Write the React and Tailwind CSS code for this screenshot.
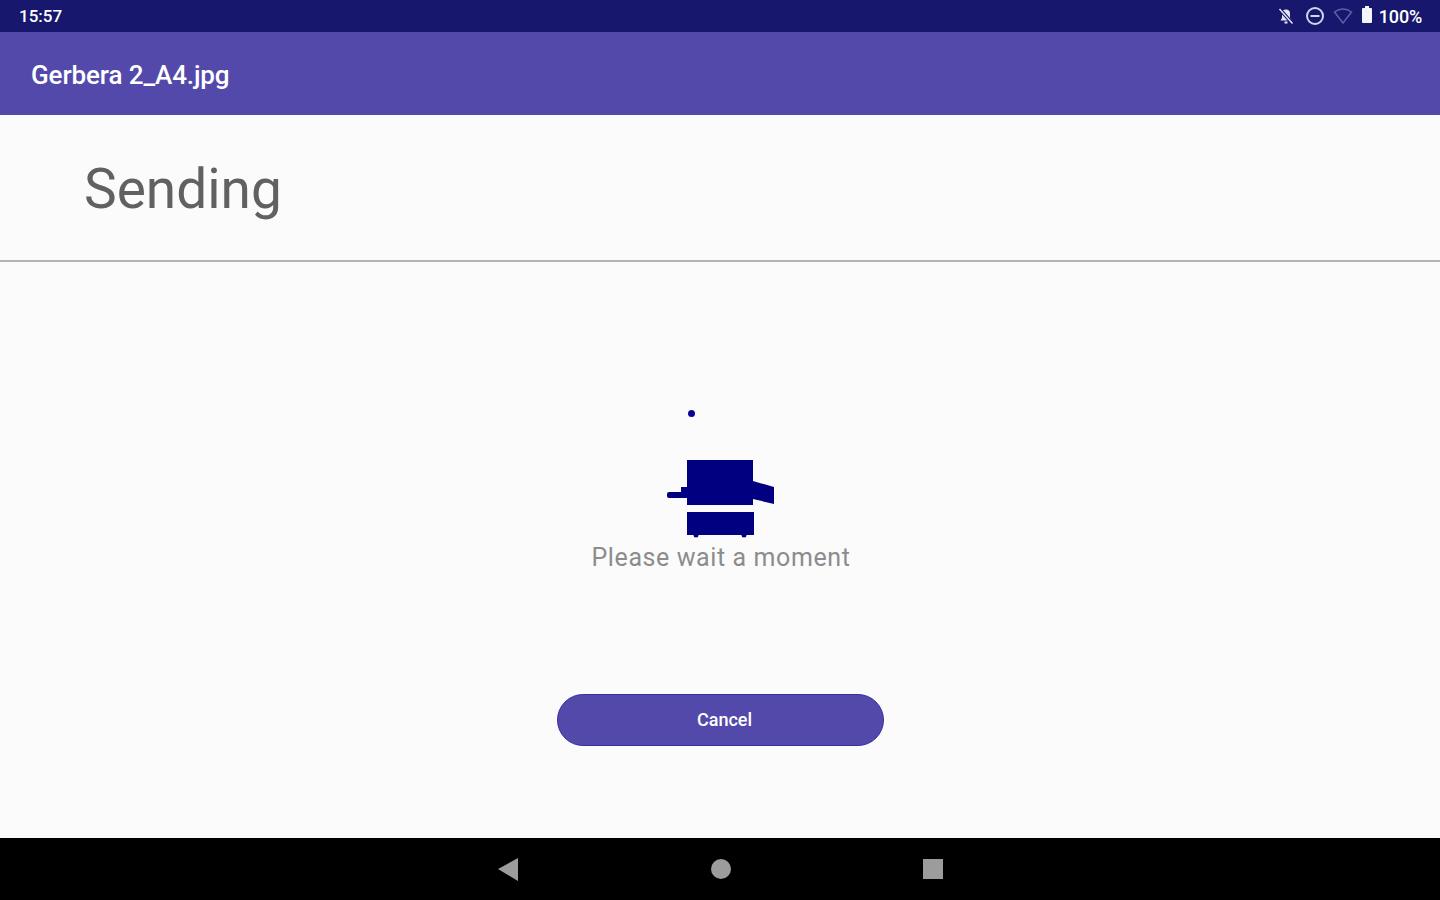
import React from "react";

const Printer = () => (
  <svg width="110" height="82" viewBox="0 0 110 82" className="block" fill="#000080">
    {/* main body */}
    <path d="M21 1H87V46H21V39H15V28H21Z" />
    {/* paper tray in */}
    <rect x="1" y="33" width="20" height="6" rx="2" />
    {/* paper tray out */}
    <path d="M87 22L108 28V45L87 40Z" />
    {/* lower cabinet */}
    <rect x="21" y="53" width="67" height="23" />
    {/* feet */}
    <circle cx="30" cy="76" r="2.500" />
    <circle cx="78" cy="76" r="2.500" />
  </svg>
);

const App = () => {
  return (
    <div className="flex h-[900px] w-[1440px] flex-col overflow-hidden bg-[#fbfbfc] font-['Roboto',sans-serif]">
      {/* Status bar */}
      <div className="flex h-[32px] items-center justify-between bg-[#17176e] pl-[19px] pr-[18px] text-white">
        <span className="pt-[1px] text-[17px] font-medium">15:57</span>
        <div className="flex items-center">
          <svg width="18" height="18" viewBox="0 0 18 18" className="mr-[10px]" fill="none" stroke="#e4e4f2" strokeWidth="2">
            <path d="M9 2.500a4 4 0 0 1 4 4V11l1.500 2.500h-11L5 11V6.500a4 4 0 0 1 4-4Z" fill="#e4e4f2" stroke="none" />
            <path d="M7.500 15.500h3" />
            <path d="M2.500 2l13 14.500" stroke="#17176e" strokeWidth="3.500" />
            <path d="M2.500 2l13 14.500" strokeWidth="1.500" />
          </svg>
          <svg width="20" height="20" viewBox="0 0 20 20" className="mr-[8px]" fill="none" stroke="#d4d4ea" strokeWidth="2">
            <circle cx="10" cy="10" r="8" />
            <path d="M5.500 10h9" />
          </svg>
          <svg width="20" height="18" viewBox="0 0 20 18" className="mr-[8px]" fill="none" stroke="#5f5fa3" strokeWidth="1.500">
            <path d="M1.500 5C6.500 1 13.500 1 18.500 5L10 16Z" />
          </svg>
          <svg width="12" height="17" viewBox="0 0 12 17" className="mr-[6px] mb-[3px]" fill="#f4f4fb">
            <path d="M4 0h4v2h2a1 1 0 0 1 1 1v13a1 1 0 0 1-1 1H2a1 1 0 0 1-1-1V3a1 1 0 0 1 1-1h2Z" />
          </svg>
          <span className="text-[18px] font-medium tracking-[-0.2px]">100%</span>
        </div>
      </div>

      {/* App bar */}
      <div className="flex h-[83px] items-center bg-[#5349ab] pl-[31px] pt-[3px] text-[26px] font-medium tracking-[-0.1px] text-white">
        Gerbera 2_A4.jpg
      </div>

      {/* Heading */}
      <div className="flex h-[147px] items-center border-b-2 border-[#b3b3b3] pl-[84px] pt-[3px]">
        <h1 className="text-[55px] leading-none text-[#616161]">Sending</h1>
      </div>

      {/* Body */}
      <div className="flex flex-1 flex-col items-center">
        <div className="mt-[148px] mr-[58px] h-[7px] w-[7px] rounded-full bg-[#0d0096]" />
        <div className="mt-[42px] mb-[2px] ml-[2px]">
          <Printer />
        </div>
        <p className="ml-[2px] text-[25px] leading-[30px] tracking-[0.6px] text-[#8c8c8c]">Please wait a moment</p>
        <button className="mt-[121px] flex h-[52px] w-[327px] items-center justify-center rounded-full border border-[#3a2fa5] bg-[#5349ab] pb-[2px] pl-[9px] text-[18px] font-medium text-white">
          Cancel
        </button>
      </div>

      {/* Nav bar */}
      <div className="flex h-[62px] items-center justify-center gap-[192px] bg-black">
        <svg width="22" height="24" viewBox="0 0 22 24" fill="#9c9c9c">
          <path d="M1 12L21 1V24Z" />
        </svg>
        <div className="h-[20px] w-[20px] rounded-full bg-[#9c9c9c]" />
        <div className="h-[20px] w-[20px] bg-[#9c9c9c]" />
      </div>
    </div>
  );
};

export default App;
